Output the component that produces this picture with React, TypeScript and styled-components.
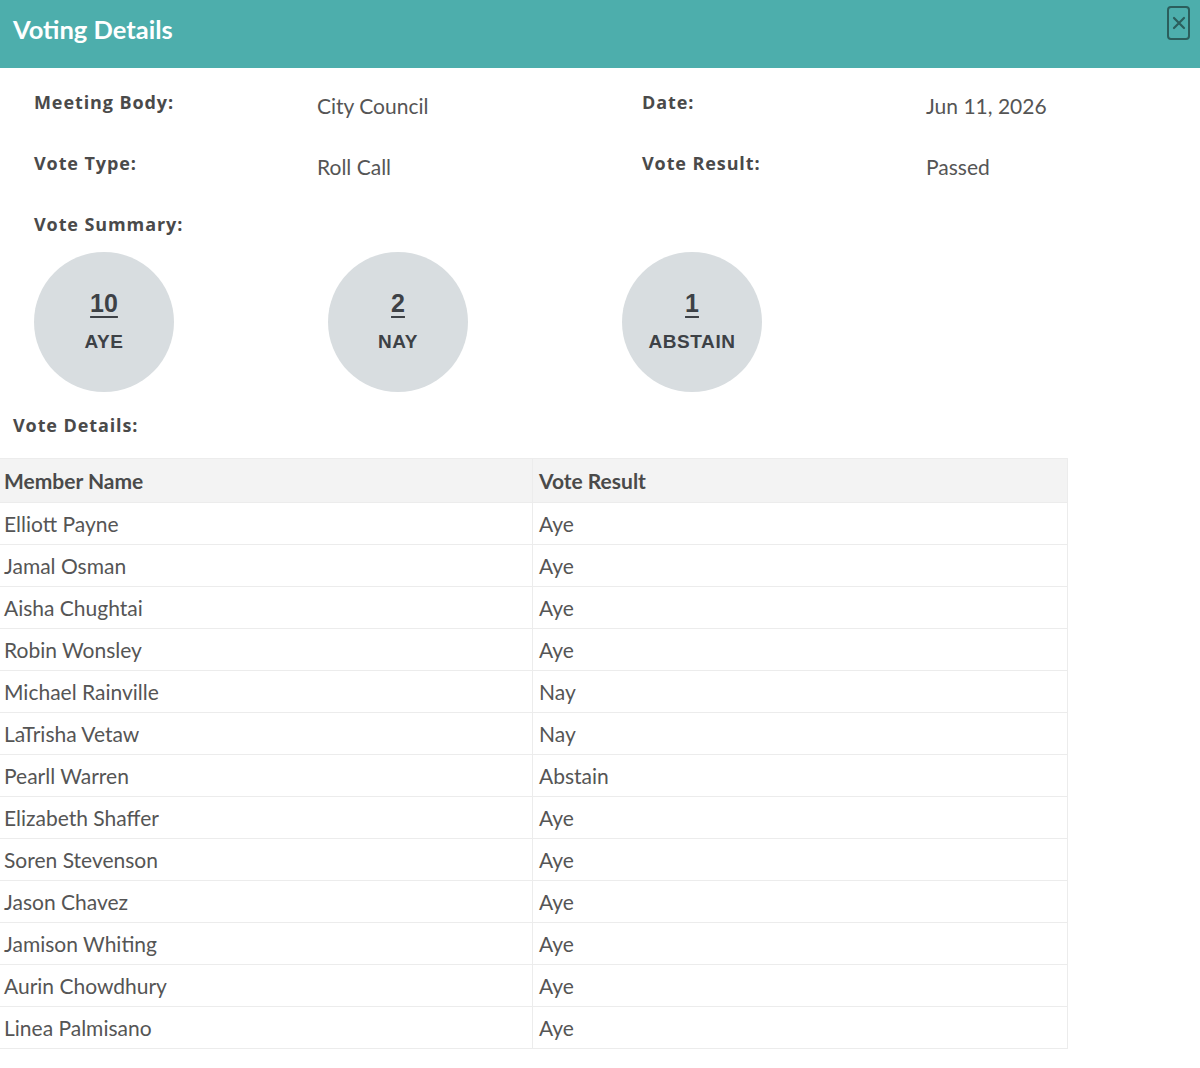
import styled, { createGlobalStyle } from "styled-components";

const GlobalStyle = createGlobalStyle`
  body {
    margin: 0;
    background: #ffffff;
    font-family: Lato, "Open Sans", sans-serif;
  }
`;

const Header = styled.div`
  height: 68px;
  background: #4daeac;
  display: flex;
  align-items: flex-start;
  justify-content: space-between;
  padding: 0 10px 0 13px;
  box-sizing: border-box;
`;

const Title = styled.h1`
  margin: 0;
  padding-top: 14px;
  font-family: Lato, sans-serif;
  font-weight: 700;
  font-size: 25.5px;
  color: #ffffff;
`;

const CloseButton = styled.button`
  margin-top: 6px;
  width: 23px;
  height: 34px;
  padding: 0;
  border: 2px solid #2b5e5c;
  border-radius: 4px;
  background: transparent;
  display: flex;
  align-items: center;
  justify-content: center;
  cursor: pointer;
`;

const Body = styled.div`
  padding: 0 34px;
`;

const InfoGrid = styled.div`
  display: grid;
  grid-template-columns: 283px 325px 284px 1fr;
  grid-template-rows: 61px 61px 40px;
  padding-top: 22px;
`;

const Label = styled.div`
  font-family: "Open Sans", sans-serif;
  font-weight: 700;
  font-size: 18px;
  letter-spacing: 0.9px;
  color: #4a4a4a;
  line-height: 24px;
`;

const Value = styled.div`
  font-family: Lato, sans-serif;
  font-size: 21px;
  color: #555555;
  line-height: 24px;
  padding-top: 4px;
`;

const Circles = styled.div`
  display: grid;
  grid-template-columns: 294px 294px 140px;
`;

const Circle = styled.div`
  width: 140px;
  height: 140px;
  border-radius: 50%;
  background: #d8dde0;
  display: flex;
  flex-direction: column;
  align-items: center;
  justify-content: center;
  gap: 14px;
  font-family: "Liberation Sans", Arial, sans-serif;
  color: #3d4146;
  font-weight: 700;
`;

const Count = styled.a`
  font-size: 25px;
  color: #3d4146;
  text-decoration: underline;
  text-underline-offset: 4px;
  text-decoration-thickness: 2px;
  line-height: 28px;
  margin-top: -2px;
`;

const CountLabel = styled.span`
  font-size: 19px;
  letter-spacing: 0.6px;
  line-height: 22px;
`;

const SectionLabel = styled(Label)`
  padding: 21px 13px 21px;
`;

const Table = styled.table`
  width: 1068px;
  border-collapse: collapse;
  font-family: Lato, sans-serif;
  font-size: 21px;
  color: #555555;
`;

const HeadCell = styled.th`
  background: #f3f3f3;
  text-align: left;
  font-weight: 700;
  color: #4a4a4a;
  height: 43px;
  padding: 0 4px;
  border: 1px solid #ececec;
  border-left: none;
  &:first-child {
    width: 524px;
  }
  &:last-child {
    padding-left: 6px;
  }
`;

const Cell = styled.td`
  height: 41px;
  padding: 0 4px;
  border: 1px solid #ececec;
  border-left: none;
  &:last-child {
    padding-left: 6px;
  }
`;

const votes: [string, string][] = [
  ["Elliott Payne", "Aye"],
  ["Jamal Osman", "Aye"],
  ["Aisha Chughtai", "Aye"],
  ["Robin Wonsley", "Aye"],
  ["Michael Rainville", "Nay"],
  ["LaTrisha Vetaw", "Nay"],
  ["Pearll Warren", "Abstain"],
  ["Elizabeth Shaffer", "Aye"],
  ["Soren Stevenson", "Aye"],
  ["Jason Chavez", "Aye"],
  ["Jamison Whiting", "Aye"],
  ["Aurin Chowdhury", "Aye"],
  ["Linea Palmisano", "Aye"],
];

const summary = [
  { count: 10, label: "AYE" },
  { count: 2, label: "NAY" },
  { count: 1, label: "ABSTAIN" },
];

const App = () => {
  return (
    <>
      <GlobalStyle />
      <Header>
        <Title>Voting Details</Title>
        <CloseButton aria-label="Close">
          <svg width="14" height="14" viewBox="0 0 14 14">
            <path
              d="M2 2 L12 12 M12 2 L2 12"
              stroke="#2b5e5c"
              strokeWidth="2.2"
              strokeLinecap="round"
            />
          </svg>
        </CloseButton>
      </Header>
      <Body>
        <InfoGrid>
          <Label>Meeting Body:</Label>
          <Value>City Council</Value>
          <Label>Date:</Label>
          <Value>Jun 11, 2026</Value>
          <Label>Vote Type:</Label>
          <Value>Roll Call</Value>
          <Label>Vote Result:</Label>
          <Value>Passed</Value>
          <Label>Vote Summary:</Label>
        </InfoGrid>
        <Circles>
          {summary.map((s) => (
            <Circle key={s.label}>
              <Count href="#">{s.count}</Count>
              <CountLabel>{s.label}</CountLabel>
            </Circle>
          ))}
        </Circles>
      </Body>
      <SectionLabel>Vote Details:</SectionLabel>
      <Table>
        <thead>
          <tr>
            <HeadCell>Member Name</HeadCell>
            <HeadCell>Vote Result</HeadCell>
          </tr>
        </thead>
        <tbody>
          {votes.map(([name, result]) => (
            <tr key={name}>
              <Cell>{name}</Cell>
              <Cell>{result}</Cell>
            </tr>
          ))}
        </tbody>
      </Table>
    </>
  );
};

export default App;
